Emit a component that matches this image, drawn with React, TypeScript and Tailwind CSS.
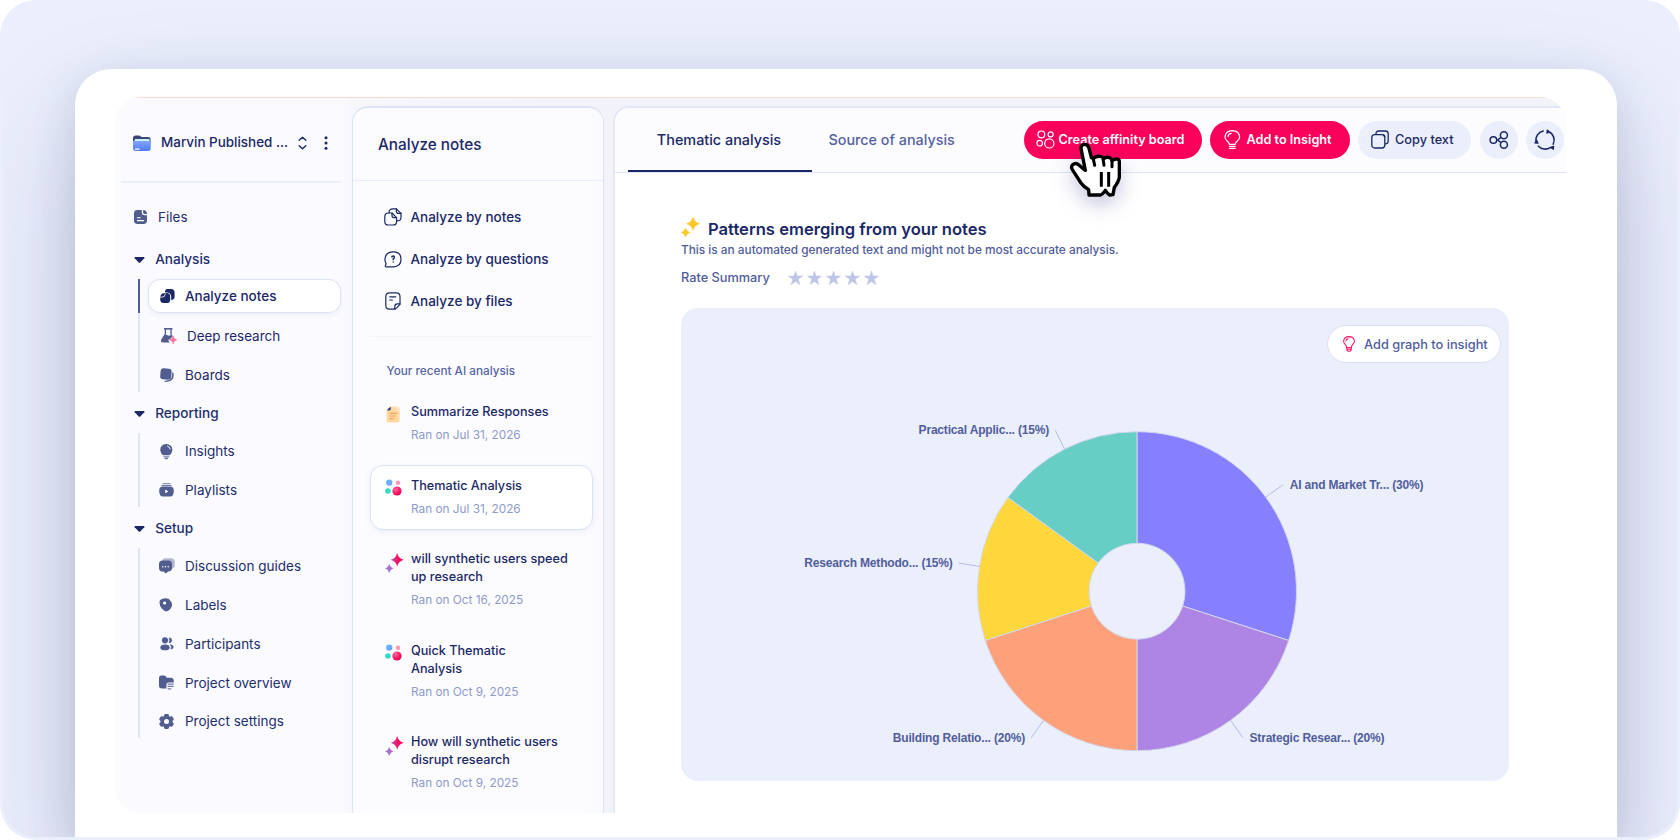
import React from "react";

const slate = "#515d8f";
const navy = "#1b2866";

/* ---------- sidebar icons ---------- */

const FolderIcon = () => (
  <svg width="18" height="16" viewBox="0 0 18 16" fill="none">
    <defs>
      <linearGradient id="folder" x1="0" y1="4" x2="0" y2="16" gradientUnits="userSpaceOnUse">
        <stop stopColor="#8fadff" />
        <stop offset="1" stopColor="#4f7cf3" />
      </linearGradient>
    </defs>
    <path d="M0 3Q0 .5 2.4.5H5.6Q6.8.5 7.6 1.3L8.6 2.1H15Q17.6 2.1 17.6 4.6V8H0Z" fill="#3a4578" />
    <rect x="1.6" y="4" width="15" height="4" rx="1" fill="#c8f1f4" />
    <path d="M0 6H17.8V13Q17.8 16 15 16H3Q0 16 0 13Z" fill="url(#folder)" />
    <rect x="1.8" y="13.4" width="4.8" height="1.4" rx=".7" fill="#fff" />
  </svg>
);

const FileIcon = () => (
  <svg width="13" height="14" viewBox="0 0 13 14" fill="none">
    <path d="M3.4 0H7.8V2.8Q7.8 5.2 10.2 5.2H13V10.6Q13 14 9.6 14H3.4Q0 14 0 10.6V3.4Q0 0 3.4 0Z" fill={slate} />
    <path d="M9.1.1Q12.8.4 13 3.9H10.4Q9.1 3.9 9.1 2.6Z" fill={slate} />
    <path d="M3.4 7.8H6.4M3.4 10.6H9.6" stroke="#fff" strokeWidth="1.1" strokeLinecap="round" />
  </svg>
);

const AnalyzeIcon = () => (
  <svg width="15" height="15" viewBox="0 0 15 15" fill="none">
    <path d="M7.6 0H11Q14.6 0 14.6 3.6V7.4Q14.6 10.8 11.2 11V7.6Q11 3.6 6.8 3.4H5Q4.8 0 7.6 0Z" fill={navy} />
    <path d="M4.8 4.1V4.8Q4.8 7.6 1.6 7.8H.3Q.8 4.4 4.8 4.1Z" fill={navy} />
    <path d="M5.5 4.1H6.6Q10.2 4.2 10.2 7.8V10.4Q10.2 14 6.6 14H3.6Q.2 14 .2 10.6V8.5H1.8Q5.5 8.3 5.5 4.8Z" fill={navy} />
  </svg>
);

const FlaskIcon = () => (
  <svg width="16" height="16" viewBox="0 0 16 16" fill="none">
    <path d="M3 .8H11.4" stroke={slate} strokeWidth="1.6" />
    <path d="M4.4 1V6.2L1 11.6Q.3 13 1 14" stroke={slate} strokeWidth="1.3" />
    <path d="M10 1V6.6L11.2 8.6" stroke={slate} strokeWidth="1.3" />
    <path d="M3.6 7Q5 6.2 6.6 7.2T10.2 7L11.2 8.6 10.4 10 7.2 12 8.6 14.6H2Q-.2 14.4.8 11.6Z" fill={slate} />
    <path d="M12.2 8 13.4 10.6 16 11.8 13.4 13 12.2 15.8 11 13 8.2 11.8 11 10.6Z" fill="#ff6f9f" stroke="#ff6f9f" strokeWidth=".5" />
  </svg>
);

const BoardsIcon = () => (
  <svg width="14" height="14" viewBox="0 0 14 14" fill="none">
    <rect x=".4" y=".5" width="11" height="11" rx="3" transform="rotate(5 6 6)" fill={slate} />
    <path d="M12.8 4.6Q13.8 7 12.8 10.4 11.2 13.4 4.6 13.4 11.2 12.8 12 9.6Z" fill={slate} stroke={slate} strokeWidth=".8" />
  </svg>
);

const BulbSolid = () => (
  <svg width="13" height="16" viewBox="0 0 13 16" fill="none">
    <path d="M6.3 0Q12.2.4 12.4 6 12.2 9 9.6 11.2H3Q.4 9 .2 6 .4.4 6.3 0Z" fill={slate} />
    <path d="M7.6 2.2Q9.8 2.8 10.2 5" stroke="#fff" strokeWidth="1" strokeLinecap="round" />
    <path d="M3.2 12H9.4L9 13.4H3.7Z" fill={slate} opacity=".6" />
    <path d="M4.2 13.8H8.4Q7.8 15.6 6.3 15.6T4.2 13.8Z" fill={slate} opacity=".9" />
  </svg>
);

const PlaylistIcon = () => (
  <svg width="15" height="14" viewBox="0 0 15 14" fill="none">
    <path d="M4 .7H11M2.8 2.5H12.2" stroke={slate} strokeWidth="1" strokeLinecap="round" opacity=".8" />
    <path d="M3.4 3.6H11.6Q15 4 14.8 8 14.8 13.6 11 13.6H4Q.2 13.6.2 8 0 4 3.4 3.6Z" fill={slate} />
    <path d="M6.7 7.2 8.7 8.4 6.7 9.6Z" fill="#fff" stroke="#fff" strokeWidth="1" strokeLinejoin="round" />
  </svg>
);

const ChatIcon = () => (
  <svg width="16" height="16" viewBox="0 0 16 16" fill="none">
    <path d="M6.4.2H12Q15.8.2 15.8 4V7.2Q15.8 10.6 12 10.8H6.4Q3 10.6 3 7V4Q3 .2 6.4.2Z" fill={slate} opacity=".42" />
    <path d="M3.6 2.4H9.4Q13 2.4 13 6V10Q13 13.4 9.2 13.6L6.6 15.6 4.6 13.6Q0 13.8 0 10V6Q0 2.4 3.6 2.4Z" fill={slate} />
    <path d="M3.8 8.7h.1M6.5 8.7h.1M9.2 8.7h.1" stroke="#fff" strokeWidth="1.4" strokeLinecap="round" />
  </svg>
);

const LabelIcon = () => (
  <svg width="14" height="14" viewBox="0 0 14 14" fill="none">
    <path d="M1 2Q5-.8 9.6.8 13.6 4.4 13 7.6 11.6 12.6 7.2 13.4 5.4 13.4 2.8 10.6-.6 6.4 1 2Z" fill={slate} />
    <circle cx="5.6" cy="5" r="1.6" fill="#fff" />
  </svg>
);

const PeopleIcon = () => (
  <svg width="14" height="14" viewBox="0 0 14 14" fill="none" className="ml-px">
    <circle cx="5" cy="3.3" r="3.1" fill={slate} />
    <ellipse cx="5" cy="10.4" rx="4.7" ry="2.9" fill={slate} />
    <path d="M9 .8Q11.8 1 11.8 3.4T9 5.8Q10.4 3.4 9 .8Z" fill={slate} stroke={slate} strokeWidth=".5" />
    <path d="M10.2 7.4Q13.6 8 13.4 10.2 13 12 10.8 12.2 12 9.6 10.2 7.4Z" fill={slate} stroke={slate} strokeWidth=".4" />
  </svg>
);

const OverviewIcon = () => (
  <svg width="15" height="15" viewBox="0 0 15 15" fill="none">
    <path d="M0 3Q0 .4 2.4.4H5.2Q7 .6 7.8 2.8H12Q14.8 3 14.8 6V7.6H9.6Q7.4 7.6 7.4 9.8V13.6H3Q0 13.6 0 10.6Z" fill={slate} />
    <path d="M9 9.2H14.2M9 11.4H14.2M9 13.8H11.8" stroke={slate} strokeWidth="1.2" strokeLinecap="round" opacity=".8" />
  </svg>
);

const GearIcon = () => (
  <svg width="15" height="15" viewBox="0 0 15 15">
    <g fill={slate}>
      <circle cx="7.5" cy="7.5" r="5.9" />
      {[0, 60, 120, 180, 240, 300].map((a) => (
        <rect key={a} x="5" y="-.1" width="5" height="4.6" rx="1.9" transform={`rotate(${a} 7.5 7.5)`} />
      ))}
    </g>
    <circle cx="7.5" cy="7.5" r="2.5" fill="#fbfbff" />
  </svg>
);

/* ---------- analysis panel icons ---------- */

const NotesOutline = () => (
  <svg width="18" height="18" viewBox="0 0 18 18" fill="none" stroke={navy} strokeWidth="1.2" strokeLinejoin="round" strokeLinecap="round">
    <path d="M8 5H4.4Q.8 5 .8 8.6V13.4Q.8 17 4.4 17H8.8Q12.6 17 12.6 13.4V9.6Z" />
    <path d="M8 5V7.4Q8 9.6 10.2 9.6H12.6" />
    <path d="M5 4.8Q5 .8 9 .8H12.4L17 5.4V9.4Q17 12.8 12.8 12.9" />
    <path d="M12.4.8V3.2Q12.4 5.4 14.6 5.4H17" />
  </svg>
);

const QuestionOutline = () => (
  <svg width="18" height="17" viewBox="0 0 18 17" fill="none" stroke={navy} strokeWidth="1.2" strokeLinejoin="round" strokeLinecap="round">
    <path d="M9.4.8Q17 .8 17 8.2 17 15.6 9.4 15.8H2.2Q.8 15.8 1.4 14.6L2.2 12.8Q.8 10.8 1 8.2 1.2.8 9.4.8Z" />
    <path d="M7.8 6Q8 5 9.2 5T10.5 6.2Q10.5 7.1 9.2 7.8V8.7M9.2 10.9V11" strokeWidth="1.4" />
  </svg>
);

const FileOutline = () => (
  <svg width="16" height="18" viewBox="0 0 16 18" fill="none" stroke={navy} strokeWidth="1.2" strokeLinejoin="round" strokeLinecap="round" className="ml-px">
    <path d="M4.6.8H11.2Q15 .8 15 4.6V12.4L10.4 17.2H4.6Q.8 17.2.8 13.4V4.6Q.8.8 4.6.8Z" />
    <path d="M9.8 17V14.4Q9.8 11.8 12.4 11.8H15M4.8 4.8H10.8M4.8 8H7.4" />
  </svg>
);

const SummaryIcon = () => (
  <svg width="14" height="17" viewBox="0 0 14 17" fill="none" className="ml-px">
    <path d="M4.6.6H11.4Q13.6.6 13.6 2.8V14.4Q13.6 16.6 11.4 16.6H2.8Q.6 16.6.6 14.4V4.8Z" fill="#ffd9a0" />
    <path d="M9 .6H11.4Q13.6.6 13.6 2.8V8Z" fill="#ffe8c4" />
    <path d="M4.8.8V3Q4.8 4.6 3.2 4.6H1Q2.2 1.8 4.8.8Z" fill="#33417e" />
    <path d="M3.8 7.4H10.8M3.8 10H9.6M3.8 12.6H7.2" stroke="#f9a45c" strokeWidth="1.2" strokeLinecap="round" />
  </svg>
);

const DotsIcon = () => (
  <svg width="17" height="17" viewBox="0 0 17 17">
    <defs>
      <linearGradient id="blueDot" x1="0" y1="0" x2="1" y2="1"><stop stopColor="#5cc4ff" /><stop offset="1" stopColor="#7d96f6" /></linearGradient>
      <radialGradient id="redDot" cx=".35" cy=".3" r=".8"><stop stopColor="#ff6a9b" /><stop offset=".6" stopColor="#fb1565" /><stop offset="1" stopColor="#e0004f" /></radialGradient>
    </defs>
    <circle cx="4.2" cy="3.6" r="3.2" fill="url(#blueDot)" />
    <circle cx="13" cy="3.8" r="2.2" fill="#fb96b8" />
    <circle cx="2.9" cy="12" r="2.8" fill="#2edccb" />
    <circle cx="12" cy="12" r="4.6" fill="url(#redDot)" />
  </svg>
);

const SparkleIcon = () => (
  <svg width="19" height="20" viewBox="0 0 19 20">
    <defs>
      <linearGradient id="bigSpark" x1="0" y1="0" x2="1" y2="0"><stop stopColor="#b04fb5" /><stop offset=".6" stopColor="#f5105f" /><stop offset="1" stopColor="#ff0058" /></linearGradient>
      <linearGradient id="smallSpark" x1="0" y1="0" x2="1" y2="0"><stop stopColor="#8f86e2" /><stop offset="1" stopColor="#c05dbd" /></linearGradient>
    </defs>
    <path d="M12.2 0Q13.6 5.6 18.8 6.8 13.6 8 12.2 13.6 10.8 8 5.6 6.8 10.8 5.6 12.2 0Z" fill="url(#bigSpark)" />
    <path d="M4.2 10.8Q5.2 14.6 8.6 15.4 5.2 16.2 4.2 20 3.2 16.2-.2 15.4 3.2 14.6 4.2 10.8Z" fill="url(#smallSpark)" />
  </svg>
);

/* ---------- toolbar icons ---------- */

const AffinityIcon = () => (
  <svg width="19" height="19" viewBox="0 0 19 19" fill="none" stroke="#fff" strokeWidth="1.2">
    <circle cx="5.3" cy="4.4" r="3.4" />
    <circle cx="14.6" cy="4.4" r="2.5" />
    <circle cx="3.7" cy="13.2" r="2.8" />
    <circle cx="13.3" cy="13.4" r="4.6" />
  </svg>
);

const BulbOutline = () => (
  <svg width="17" height="19" viewBox="0 0 17 19" fill="none" stroke="#fff" strokeWidth="1.2" strokeLinecap="round" strokeLinejoin="round">
    <path d="M5.4 14.4Q5.2 12.6 3.2 11 1 9.2 1 6.9 1.6.8 8.3.7 15 .8 15.6 6.9 15.6 9.2 13.4 11 11.4 12.6 11.2 14.4Z" />
    <path d="M4 6.4Q4.4 3.8 7.2 3.4M5.4 16.3H11.2M5.4 18.3H11.2" />
  </svg>
);

const CopyIcon = () => (
  <svg width="18" height="19" viewBox="0 0 18 19" fill="none" stroke={navy} strokeWidth="1.3" strokeLinejoin="round">
    <rect x=".8" y="4.6" width="13" height="13.4" rx="3" />
    <path d="M5 4.4V3.6Q5 1 7.8 1H14.4Q17.2 1 17.2 3.8V11Q17.2 13.8 14.4 13.9H14" />
    <path d="M12.2 4.8Q13.6 5 13.7 7" strokeWidth="1.6" />
  </svg>
);

const ShareIcon = () => (
  <svg width="20" height="18" viewBox="0 0 20 18" fill="none" stroke={navy} strokeWidth="1.5">
    <circle cx="4.4" cy="9" r="3.3" />
    <circle cx="14.9" cy="4.3" r="3.5" />
    <circle cx="14.9" cy="13.7" r="3.5" />
    <path d="M7.6 9H8.6L12 6.4M8.6 9 12 11.6" />
  </svg>
);

const CycleIcon = () => (
  <svg width="22" height="22" viewBox="0 0 22 22" fill="none" stroke={navy} strokeWidth="1.6" strokeLinecap="round">
    <path d="M4.4 17.2A9.2 9.2 0 0 0 16.2 18.6" />
    <path d="M19.2 15.1A9.2 9.2 0 0 0 14.6 2.6" />
    <path d="M9.2 2A9.2 9.2 0 0 0 2 12.6" />
    <path d="M13.2 1 15.4 3 12.9 4.2Z M.8 14 4 14.2 2.8 11.4Z M19.6 17.2 19.4 20.2 16.6 18.4Z" fill={navy} strokeWidth="1.2" strokeLinejoin="round" />
  </svg>
);

const PinkBulb = () => (
  <svg width="12" height="16" viewBox="0 0 12 16" fill="none" stroke="#fb1a68" strokeWidth="1.1" strokeLinecap="round" strokeLinejoin="round">
    <path d="M3.6 11.6Q3.6 9.8 2 8.2.6 6.8.6 5.2 1 .7 6 .6 11 .7 11.4 5.2 11.4 6.8 10 8.2 8.4 9.8 8.4 11.6Z" />
    <path d="M2.9 5Q3.2 3.2 5 2.9M4 13.3H8M5 15.2H7M3.8 11.8V14L5 15.2M8.2 11.8V14L7 15.2" />
  </svg>
);

const GoldSparkle = () => (
  <svg width="19" height="20" viewBox="0 0 19 20" fill="#fdc827">
    <path d="M12 0Q13.4 5.4 18.6 6.7 13.4 8 12 13.2 10.6 8 5.6 6.7 10.6 5.4 12 0Z" stroke="#fdc827" strokeWidth=".4" />
    <path d="M4.6 10.8Q5.6 14.4 9 15.4 5.6 16.4 4.6 20 3.6 16.4 0 15.4 3.6 14.4 4.6 10.8Z" stroke="#fdc827" strokeWidth=".4" />
  </svg>
);

const Star = () => (
  <svg width="15" height="14" viewBox="0 0 15 14" fill="#bdc6e6">
    <path d="M7.5 0 9.2 5H14.7L10.3 8.3 12 13.7 7.5 10.5 3 13.7 4.7 8.3.3 5H5.8Z" stroke="#bdc6e6" strokeWidth=".4" />
  </svg>
);

const PointerHand = () => (
  <svg width="56" height="60" viewBox="204 150 168 180" className="overflow-visible drop-shadow-[0_8px_10px_rgba(70,70,150,0.3)]">
    <path
      d="M254 163Q243 163 243 175L256 241Q244 232 234 223 226 217 218 224 212 231 217 239L243 279Q251 290 266 299L267 315H301Q307 314 316 301 322 311 329 315L339 314 343 292Q356 276 358 262V214Q357 207 350 207 344 207 336 212 334 203 325 202 317 201 311 206 309 199 299 199 289 198 281 205L274 203 267 175Q264 163 254 163Z"
      fill="#fff" stroke="#000" strokeWidth="10" strokeLinejoin="round"
    />
    <path d="M279 203 284 226M309 206 312 226M336 212V230" stroke="#000" strokeWidth="9" strokeLinecap="round" fill="none" />
    <path d="M304 246V290M326 246V290" stroke="#000" strokeWidth="9" fill="none" />
  </svg>
);

/* ---------- sidebar ---------- */

type Item = { label: string; icon: React.ReactNode; active?: boolean };

const SectionHeader = ({ label }: { label: string }) => (
  <div className="flex h-[41px] items-center pl-[19px] pt-[2px]">
    <svg width="11" height="6" viewBox="0 0 11 6" className="mr-[10.2px]">
      <path d="M1 0H10Q10.8.4 10.3 1.2L6.3 5.4Q5.5 6 4.7 5.4L.7 1.2Q.2.4 1 0Z" fill={navy} />
    </svg>
    <span className="text-[13.6px] font-medium">{label}</span>
  </div>
);

const NavItem = ({ label, icon, active }: Item) =>
  active ? (
    <div className="flex h-[34px] w-[193px] shrink-0 items-center rounded-[12px] border border-[#dbe2f4] bg-white pl-[11px] pt-px shadow-[0_2px_6px_rgba(60,80,160,0.08)]">
      <span className="flex w-[25px]">{icon}</span>
      <span className="text-[13.5px] font-medium">{label}</span>
    </div>
  ) : (
    <div className="flex h-[38.8px] shrink-0 items-center pl-[11px] pt-[2px]">
      <span className="flex w-[26px]">{icon}</span>
      <span className="text-[13.5px]">{label}</span>
    </div>
  );

const Sidebar = () => (
  <aside className="flex w-[228px] shrink-0 flex-col text-[#222e6b]">
    <div className="ml-[6px] flex h-[85px] w-[220px] items-center border-b-2 border-[#eaeffb] pl-[12px] pt-[6px]">
      <FolderIcon />
      <span className="ml-[10px] w-[128px] whitespace-nowrap text-[13.45px] font-medium text-[#1b2866]">Marvin Published ...</span>
      <svg width="9" height="14" viewBox="0 0 9 14" fill="none" stroke={navy} strokeWidth="1.4" strokeLinecap="round" strokeLinejoin="round" className="ml-[8.5px]">
        <path d="M1.2 4.2 4.5 1.2 7.8 4.2M1.2 9.8 4.5 12.8 7.8 9.8" />
      </svg>
      <svg width="4" height="14" viewBox="0 0 4 14" fill={navy} className="ml-[17.5px]">
        <circle cx="2" cy="1.8" r="1.5" /><circle cx="2" cy="7" r="1.5" /><circle cx="2" cy="12.2" r="1.5" />
      </svg>
    </div>
    <div className="mt-[13px] flex h-[42px] items-center pl-[19px]">
      <FileIcon />
      <span className="ml-[11px] text-[13.5px]">Files</span>
    </div>
    <SectionHeader label="Analysis" />
    <div className="flex h-[113px] pl-[23px]">
      <div className="mr-[8px] w-[2px] bg-[#dfe5f5]"><div className="h-[34px] bg-[#515d9b]" /></div>
      <div className="flex flex-col text-[#1b2866]">
        <NavItem label="Analyze notes" icon={<AnalyzeIcon />} active />
        <div className="h-[3px] shrink-0" />
        <div className="flex h-[38.8px] shrink-0 items-center pl-[13px] pt-[2px]">
          <span className="flex w-[26px]"><FlaskIcon /></span>
          <span className="text-[13.45px]">Deep research</span>
        </div>
        <NavItem label="Boards" icon={<span className="ml-px flex"><BoardsIcon /></span>} />
      </div>
    </div>
    <SectionHeader label="Reporting" />
    <div className="flex h-[74px] pl-[23px]">
      <div className="mr-[8px] w-[2px] bg-[#dfe5f5]" />
      <div className="flex flex-col justify-center">
        <NavItem label="Insights" icon={<span className="ml-px flex"><BulbSolid /></span>} />
        <NavItem label="Playlists" icon={<PlaylistIcon />} />
      </div>
    </div>
    <SectionHeader label="Setup" />
    <div className="flex h-[190px] pl-[23px]">
      <div className="mr-[8px] w-[2px] bg-[#dfe5f5]" />
      <div className="flex flex-col justify-center">
        <NavItem label="Discussion guides" icon={<ChatIcon />} />
        <NavItem label="Labels" icon={<LabelIcon />} />
        <NavItem label="Participants" icon={<PeopleIcon />} />
        <NavItem label="Project overview" icon={<OverviewIcon />} />
        <NavItem label="Project settings" icon={<GearIcon />} />
      </div>
    </div>
  </aside>
);

/* ---------- analysis list ---------- */

const Mode = ({ icon, label }: { icon: React.ReactNode; label: string }) => (
  <div className="flex h-[42px] items-center pl-[31px]">
    <span className="flex w-[26.5px] justify-start">{icon}</span>
    <span className="text-[13.5px] font-medium">{label}</span>
  </div>
);

type Run = { icon: React.ReactNode; lines: string[]; date: string; active?: boolean };

const runs: Run[] = [
  { icon: <SummaryIcon />, lines: ["Summarize Responses"], date: "Ran on Jul 31, 2026" },
  { icon: <DotsIcon />, lines: ["Thematic Analysis"], date: "Ran on Jul 31, 2026", active: true },
  { icon: <SparkleIcon />, lines: ["will synthetic users speed", "up research"], date: "Ran on Oct 16, 2025" },
  { icon: <DotsIcon />, lines: ["Quick Thematic", "Analysis"], date: "Ran on Oct 9, 2025" },
  { icon: <SparkleIcon />, lines: ["How will synthetic users", "disrupt research"], date: "Ran on Oct 9, 2025" },
];

const RunCard = ({ icon, lines, date, active }: Run) => (
  <div
    className={
      active
        ? "mb-[8.5px] flex h-[65px] w-[223px] shrink-0 rounded-[13px] border border-[#dbe2f4] bg-white pl-[14px] pt-[11px] shadow-[0_2px_6px_rgba(60,80,160,0.08)]"
        : "mb-[8.5px] flex w-[223px] shrink-0 border border-transparent pb-[10px] pl-[14px] pt-[11px]"
    }
  >
    <span className="flex w-[26.5px] shrink-0 pt-[2.5px]">{icon}</span>
    <div>
      {lines.map((l) => (
        <div key={l} className="h-[18px] whitespace-nowrap text-[12.65px] leading-[18px] font-medium">{l}</div>
      ))}
      <div className="mt-[4px] h-[20px] whitespace-nowrap text-[11.8px] leading-[20px] text-[#8e9acb]">{date}</div>
    </div>
  </div>
);

const AnalysisPanel = () => (
  <section className="mt-[8px] flex h-[720px] w-[252px] shrink-0 flex-col rounded-t-[16px] border-x border-t-2 border-[#dde5f5] bg-[linear-gradient(90deg,#fcfcff_237px,#fbfaff_237px)] text-[#1b2866]">
    <div className="flex h-[73px] items-center border-b border-[#e5ecfa] pl-[25px] pt-[2px]">
      <span className="text-[15.3px] font-medium">Analyze notes</span>
    </div>
    <div className="flex flex-col pt-[15px]">
      <Mode icon={<NotesOutline />} label="Analyze by notes" />
      <Mode icon={<QuestionOutline />} label="Analyze by questions" />
      <Mode icon={<FileOutline />} label="Analyze by files" />
    </div>
    <div className="ml-[16px] mt-[14px] h-px w-[223px] bg-[#f3f4fb]" />
    <div className="ml-[33.5px] mt-[24px] h-[20px] text-[11.75px] leading-[20px] font-medium text-[#5765a3]">Your recent AI analysis</div>
    <div className="ml-[16.5px] mt-[10px] flex flex-col">
      {runs.map((r, i) => <RunCard key={i} {...r} />)}
    </div>
  </section>
);

/* ---------- chart ---------- */

type Slice = { pct: number; color: string; label: string; x: number; y: number; anchor: "start" | "end"; line: string };

const slices: Slice[] = [
  { pct: 30, color: "#8680ff", label: "AI and Market Tr... (30%)", x: 608.8, y: 180.5, anchor: "start", line: "M584.8 189 602 176.8" },
  { pct: 20, color: "#ae85e4", label: "Strategic Resear... (20%)", x: 568.5, y: 433.6, anchor: "start", line: "M549.6 412.4 562 429.8" },
  { pct: 20, color: "#fea17a", label: "Building Relatio... (20%)", x: 344, y: 433.6, anchor: "end", line: "M362.4 412.4 350.2 429.8" },
  { pct: 15, color: "#fdd73b", label: "Research Methodo... (15%)", x: 271.5, y: 259, anchor: "end", line: "M298.6 258.5 277.8 255" },
  { pct: 15, color: "#67cec5", label: "Practical Applic... (15%)", x: 368, y: 125.7, anchor: "end", line: "M383.6 141.2 374.4 122.4" },
];

const CX = 456;
const CY = 283.2;
const R = 159.5;
const r0 = 48;

const point = (r: number, p: number) => {
  const a = (p / 100) * Math.PI * 2;
  return `${(CX + r * Math.sin(a)).toFixed(2)} ${(CY - r * Math.cos(a)).toFixed(2)}`;
};

const Donut = () => {
  let at = 0;
  return (
    <svg width="828" height="473" viewBox="0 0 828 473">
      {slices.map((s) => {
        const from = at;
        at += s.pct;
        return (
          <g key={s.label}>
            <path
              d={`M${point(R, from)}A${R} ${R} 0 0 1 ${point(R, at)}L${point(r0, at)}A${r0} ${r0} 0 0 0 ${point(r0, from)}Z`}
              fill={s.color} stroke="#d3d7ec" strokeWidth="1"
            />
            <path d={s.line} stroke="#b4bbe6" strokeWidth="1" fill="none" />
            <text x={s.x} y={s.y} textAnchor={s.anchor} fill="#515d9b" className="font-['Liberation_Sans',sans-serif] text-[12px] font-bold tracking-[-0.18px]">{s.label}</text>
          </g>
        );
      })}
    </svg>
  );
};

/* ---------- results ---------- */

const Results = () => (
  <main className="mt-[8px] flex h-[720px] w-[960px] shrink-0 flex-col rounded-tl-[16px] border-l-2 border-t-2 border-[#e2e8f6] bg-white">
    <header className="flex h-[65px] w-[951px] shrink-0 rounded-tl-[15px] border-b border-[#dde5f5] bg-[#fcfcff]">
      <div className="ml-[13px] flex w-[184px] items-center justify-center border-b-2 border-[#1b2866] pr-[2px] pt-px">
        <span className="text-[14.4px] font-medium text-[#1b2866]">Thematic analysis</span>
      </div>
      <div className="ml-[16.5px] flex items-center">
        <span className="text-[14.35px] font-medium text-[#55629f]">Source of analysis</span>
      </div>
      <div className="ml-auto mr-[2px] flex items-center pb-[1px]">
        <button className="relative flex h-[38px] w-[178px] items-center rounded-full bg-[#fb005b] pl-[12px] text-[12.65px] font-semibold text-white">
          <AffinityIcon />
          <span className="ml-[4px] mt-[2px] whitespace-nowrap">Create affinity board</span>
          <span className="absolute left-[44px] top-[19px] z-10 block"><PointerHand /></span>
        </button>
        <button className="ml-[8.5px] flex h-[38px] w-[139.5px] items-center rounded-full bg-[#fb005b] pl-[13.5px] text-[12.7px] font-semibold text-white">
          <BulbOutline />
          <span className="ml-[6px] mt-px whitespace-nowrap">Add to Insight</span>
        </button>
        <button className="ml-[8.5px] flex h-[38px] w-[113px] items-center rounded-full bg-[#ebeffc] pl-[13px] text-[12.75px] font-medium text-[#1b2866]">
          <CopyIcon />
          <span className="ml-[6px] mt-px whitespace-nowrap">Copy text</span>
        </button>
        <button className="ml-[9px] flex h-[38px] w-[38px] items-center justify-center rounded-full bg-[#ebeffc]"><ShareIcon /></button>
        <button className="ml-[8px] flex h-[38px] w-[38px] items-center justify-center rounded-full bg-[#ebeffc]"><CycleIcon /></button>
      </div>
    </header>
    <div className="flex flex-col pl-[66px] pt-[43px]">
      <div className="flex h-[25px] items-center">
        <span className="mb-[3px] flex"><GoldSparkle /></span>
        <h1 className="ml-[8px] mt-px text-[16.6px] font-semibold text-[#1b2866]">Patterns emerging from your notes</h1>
      </div>
      <p className="h-[18px] text-[11.83px] leading-[18px] font-medium text-[#515d9b]">
        This is an automated generated text and might not be most accurate analysis.
      </p>
      <div className="mt-[9px] flex h-[20px] items-center text-[#515d9b]">
        <span className="w-[107px] text-[12.75px] font-medium">Rate Summary</span>
        <div className="flex gap-[4px]"><Star /><Star /><Star /><Star /><Star /></div>
      </div>
      <div className="relative mt-[20px] h-[473px] w-[828px] rounded-[17px] bg-[#ebeffc]">
        <Donut />
        <button className="absolute right-[8px] top-[17px] flex h-[38px] w-[174px] items-center rounded-full border border-[#dbe1f3] bg-white pl-[15px] text-[12.8px] font-medium text-[#515d9b]">
          <PinkBulb />
          <span className="ml-[9px] mt-px whitespace-nowrap">Add graph to insight</span>
        </button>
      </div>
    </div>
  </main>
);

export default function App() {
  return (
    <div className="h-[840px] w-[1680px] overflow-hidden rounded-[36px] bg-[#ebeffc] p-[3px] font-['Inter',sans-serif]">
      <div className="h-[834px] w-[1674px] overflow-hidden rounded-[33px] pl-[72px] pt-[66px]">
        <div className="h-[768px] w-[1542px] rounded-t-[36px] bg-white pl-[40px] pt-[28px] shadow-[0_10px_44px_rgba(55,65,120,0.17),0_60px_120px_rgba(55,65,120,0.22)]">
          <div className="h-[716px] w-[1451px] overflow-hidden rounded-[26px] rounded-br-none bg-[linear-gradient(90deg,#fbfbff_228px,#f6f7fb_238px,#f2f3f9_500px)]">
            <div className="h-px bg-[#fbd8d2]" />
            <div className="flex">
              <Sidebar />
              <div className="ml-[9px] flex shrink-0 gap-[9px]">
                <AnalysisPanel />
                <Results />
              </div>
            </div>
          </div>
        </div>
      </div>
    </div>
  );
}
